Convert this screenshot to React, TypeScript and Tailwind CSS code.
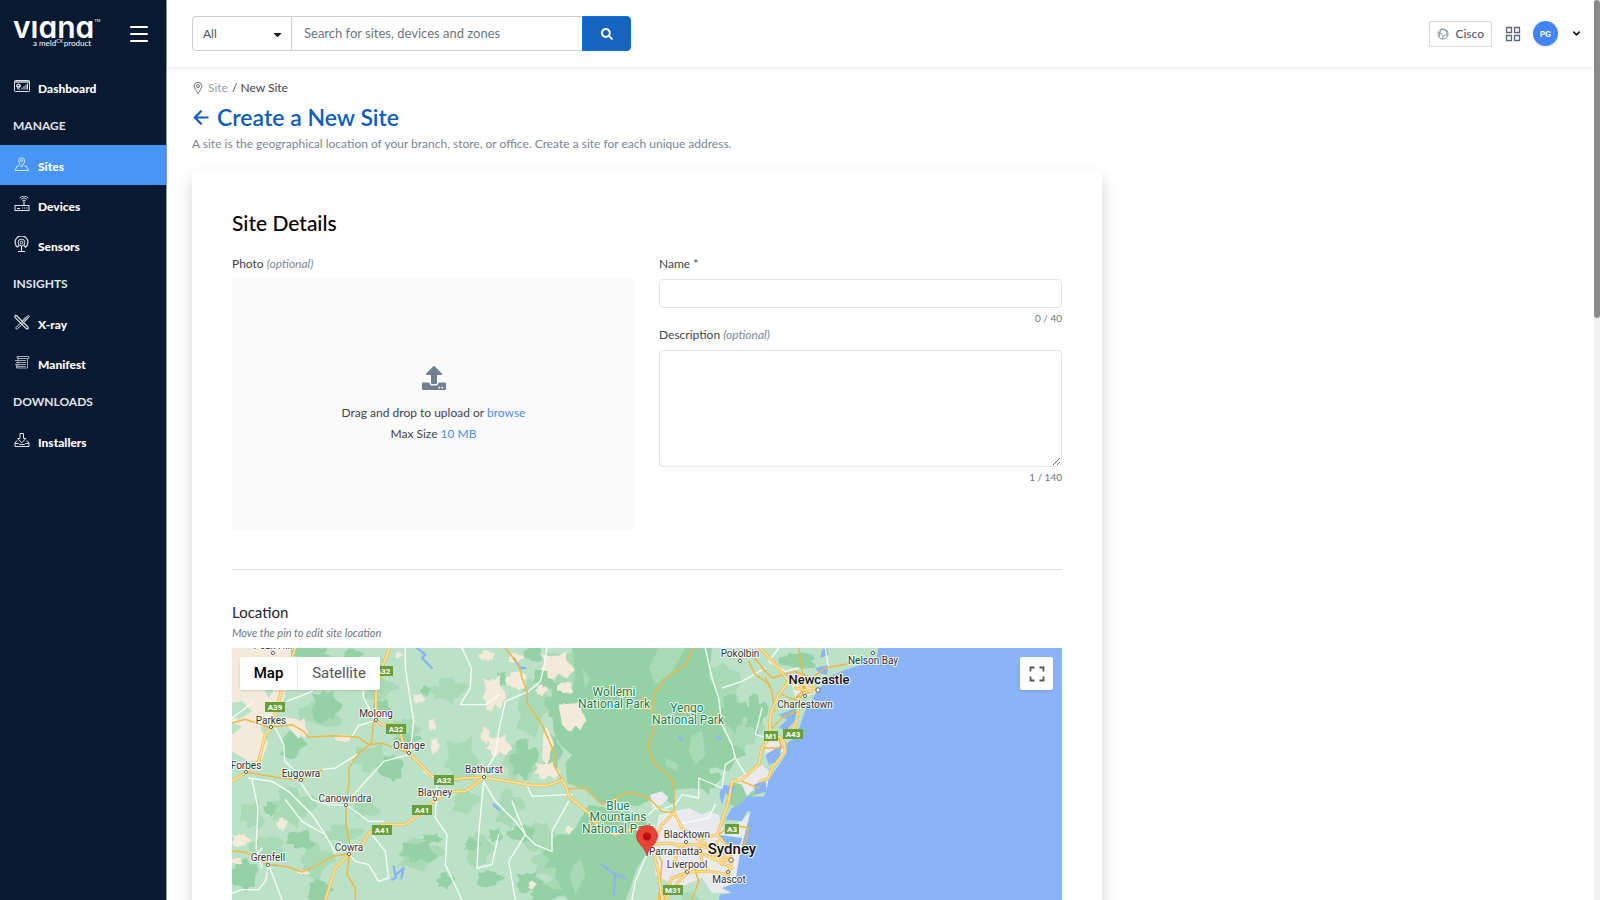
import React from 'react';
import { ChevronDown } from 'lucide-react';
import { FaCaretDown, FaSearch, FaUpload } from 'react-icons/fa';

interface NavItem {
  label: string;
  icon: React.ReactNode;
  active?: boolean;
}

interface NavSection {
  title?: string;
  items: NavItem[];
}

const Icon = ({ children, className = '' }: { children: React.ReactNode; className?: string }) => (
  <svg
    viewBox="0 0 16 16"
    className={`h-4 w-4 shrink-0 ${className}`}
    fill="none"
    stroke="currentColor"
    strokeWidth="1"
    aria-hidden="true"
  >
    {children}
  </svg>
);

const sections: NavSection[] = [
  {
    items: [
      {
        label: 'Dashboard',
        icon: (
          <Icon>
            <rect x="0.5" y="2.5" width="15" height="11" rx="0.8" />
            <path d="M1 4h14" strokeWidth="1.4" />
            <path d="M3 6.5h3v2H3zM3 10l3 1.5M8 11.5v-2M10 11.5V8M12 11.5V6.5M13.5 11.5v-6" />
            <circle cx="4.5" cy="8" r="1.8" />
          </Icon>
        ),
      },
    ],
  },
  {
    title: 'MANAGE',
    items: [
      {
        label: 'Sites',
        active: true,
        icon: (
          <Icon>
            <path d="M7.7 11C6.2 8.5 4.7 6.7 4.7 4.8a3 3 0 0 1 6 0C10.7 6.7 9.2 8.5 7.7 11z" />
            <circle cx="7.7" cy="4.7" r="1" />
            <path d="M5 10H3.2L1 14.5h13.5L12.3 10h-1.8" />
          </Icon>
        ),
      },
      {
        label: 'Devices',
        icon: (
          <Icon>
            <rect x="1" y="9.5" width="14" height="5" />
            <path d="M3 12.5h3M8 12h1M10 12h1M12 12h1.5M10 9.5v-4" strokeWidth="1.2" />
            <path d="M8.3 5a2.3 2.3 0 0 1 3.4 0M7 3.4a4.2 4.2 0 0 1 6 0M5.7 2a6 6 0 0 1 8.6 0" />
          </Icon>
        ),
      },
      {
        label: 'Sensors',
        icon: (
          <Icon>
            <circle cx="7.5" cy="6.5" r="1.4" />
            <circle cx="7.5" cy="6.5" r="3.4" />
            <path d="M3.5 11.2a6.4 6.4 0 1 1 8 0L10 9.3M3.5 11.2L5 9.3M7.5 10v5.5M4 15.5h7" strokeWidth="1.2" />
          </Icon>
        ),
      },
    ],
  },
  {
    title: 'INSIGHTS',
    items: [
      {
        label: 'X-ray',
        icon: (
          <Icon>
            <path
              d="M2.5 1.5l11.5 11.5M1 3.3l11.5 11.5M1 3.3C.6 1.5 1.5 1 2.5 1.5M12.5 14.8c1.5.3 2.2-.3 1.5-1.8"
              strokeWidth="1.2"
            />
            <path d="M14 1.5L2 13.5M15 3L3.5 14.8M14 1.5c1.2-.3 1.4.6 1 1.5M2 13.5c-.8 1 .2 1.8 1.5 1.3M11 3.5l2 2M10 4.5l2 2M9 5.5l2 2M13 2.5l1.5 1.5" />
          </Icon>
        ),
      },
      {
        label: 'Manifest',
        icon: (
          <Icon className="opacity-70">
            <path d="M3 4V2.5h12v2h-1.5v9.5H2.5V11" />
            <path d="M3 4.5h10M1 6.5h11M2 8.5h10M1 10.5h11M3.5 12.5h8M4 2v12" />
          </Icon>
        ),
      },
    ],
  },
  {
    title: 'DOWNLOADS',
    items: [
      {
        label: 'Installers',
        icon: (
          <Icon>
            <path d="M6 1.5h3.5v5h2.3L7.75 10.8 3.7 6.5H6z" />
            <path d="M3.5 9H2.5L1 11v3.5h14V11l-1.5-2h-1M1 11.5h3.5l1 1h5l1-1H15" />
          </Icon>
        ),
      },
    ],
  },
];

const Sidebar = () => (
  <aside className="flex w-[167px] shrink-0 flex-col border-r border-[#8d96a3] bg-[#071a31] text-white">
    <div className="flex h-[67px] items-center justify-between pr-[18px] pl-[13px]">
      <a href="#" aria-label="viana" className="flex flex-col pb-1.5">
        <span className="flex items-start font-[Inter,sans-serif] text-[30px] leading-6 font-semibold [font-feature-settings:'cv11']">
          vıana
          <span className="text-[4px] leading-3 font-normal">TM</span>
        </span>
        <span className="flex items-start pl-5 font-[Lato,sans-serif] text-[8px] leading-2">
          a meld
          <span className="text-[5px] leading-1">CX</span>
          <span className="pl-px">product</span>
        </span>
      </a>
      <button type="button" aria-label="Toggle menu" className="flex flex-col gap-[5px]">
        <span className="h-0.5 w-[18px] rounded-sm bg-white" />
        <span className="h-0.5 w-[18px] rounded-sm bg-white" />
        <span className="h-0.5 w-[18px] rounded-sm bg-white" />
      </button>
    </div>
    <nav>
      {sections.map((section, index) => (
        <div key={index}>
          {section.title && (
            <h2 className="flex h-[38px] items-center text-[12px] leading-4 pl-[13px] font-bold text-[#e2e5ea]">{section.title}</h2>
          )}
          {section.items.map((item) => (
            <a
              key={item.label}
              href="#"
              className={`flex h-10 items-center gap-2 pl-[14px] text-[12px] font-black ${
                item.active ? 'bg-[#4796f7]' : ''
              }`}
            >
              <span className="pb-0.5 text-[#dfe3e8]">{item.icon}</span>
              <span className="pt-1">{item.label}</span>
            </a>
          ))}
        </div>
      ))}
    </nav>
  </aside>
);

const Header = () => (
  <header className="z-10 flex h-[67px] shrink-0 items-center justify-between bg-white pr-3 pl-[25px] shadow-[0_1px_4px_rgba(0,0,0,0.12)]">
    <form className="flex h-[35px] w-[439px]" onSubmit={(e) => e.preventDefault()}>
      <div className="relative w-[100px] shrink-0">
        <select
          aria-label="Search category"
          className="h-full w-full appearance-none rounded-l border border-[#c8cfd8] bg-white pl-2.5 text-[12px] text-[#495057]"
        >
          <option>All</option>
        </select>
        <FaCaretDown size={13} className="pointer-events-none absolute top-3 right-2 text-[#212529]" />
      </div>
      <input
        type="text"
        aria-label="Search"
        placeholder="Search for sites, devices and zones"
        className="min-w-0 flex-1 border-y border-[#c8cfd8] bg-white px-3 text-[13px] placeholder:text-[#6c757d]"
      />
      <button
        type="submit"
        aria-label="Search"
        className="flex w-[49px] items-center justify-center rounded-r border border-[#0a74e6] bg-[#1564c0] text-white"
      >
        <FaSearch size={12} />
      </button>
    </form>
    <div className="flex items-center">
      <button
        type="button"
        className="flex h-[26px] items-center gap-1.5 rounded-xs border border-[#d3dae2] px-[7px] text-[12px] text-[#495057]"
      >
        <Icon className="h-3! w-3! text-[#6b7a90]">
          <circle cx="8" cy="8" r="6.8" />
          <path d="M6 1.5L4 6l4 5 5-2V3.5M4 6L1.5 7M8 11l-1 4M13 9l1.5 1M6 1.5L13 4M4 6l-1 6.5" />
        </Icon>
        Cisco
      </button>
      <button type="button" aria-label="Apps" className="ml-[13px] text-[#5a677d]">
        <Icon>
          <path d="M1.5 1.5h5v5h-5zM9.5 1.5h5v5h-5zM1.5 9.5h5v5h-5zM9.5 9.5h5v5h-5z" strokeWidth="1.3" />
        </Icon>
      </button>
      <button type="button" className="ml-3 flex items-center gap-[13px]">
        <span className="flex h-[25px] w-[25px] items-center justify-center rounded-full bg-[#4285f4] font-[Inter,sans-serif] text-[8px] font-bold text-white shadow">
          PG
        </span>
        <ChevronDown size={11} strokeWidth={4} className="text-[#212529]" />
      </button>
    </div>
  </header>
);

// Irregular patch of land cover, always the same for the same centre
const patch = (x: number, y: number, rx: number, ry: number) => {
  const points: string[] = [];
  for (let i = 0; i < 18; i++) {
    const angle = (i / 18) * Math.PI * 2;
    const k = 0.82 + 0.24 * Math.sin(x * 1.7 + y * 0.9 + i * i * 2.3);
    points.push(`${(x + Math.cos(angle) * rx * k).toFixed(1)} ${(y + Math.sin(angle) * ry * k).toFixed(1)}`);
  }
  return `M${points.join('L')}Z`;
};

type Patch = [number, number, number, number];

const midPatches: Patch[] = [
  [270, 200, 70, 50], [420, 330, 60, 50], [520, 240, 50, 40], [180, 480, 80, 60], [330, 560, 70, 30],
  [690, 330, 60, 80], [740, 600, 50, 60], [650, 130, 60, 40], [110, 600, 60, 40], [250, 640, 60, 60],
  [560, 620, 80, 50], [700, 460, 50, 40], [440, 120, 60, 40], [830, 480, 50, 60], [900, 180, 60, 90],
  [960, 640, 70, 60], [1000, 720, 70, 40], [860, 330, 60, 70], [1010, 60, 90, 70], [1060, 240, 80, 90],
  [920, 560, 60, 50], [60, 500, 40, 50], [400, 480, 50, 30], [1460, 130, 80, 90], [1520, 260, 80, 60],
];

const forestPatches: Patch[] = [
  [235, 15, 70, 24], [280, 170, 55, 55], [180, 290, 45, 45], [478, 365, 42, 45], [450, 175, 30, 25],
  [525, 275, 45, 18], [115, 485, 20, 26], [205, 575, 45, 35], [35, 685, 48, 55], [260, 725, 45, 38],
  [560, 610, 60, 40], [640, 700, 30, 26], [770, 690, 50, 28], [600, 570, 36, 16], [90, 220, 20, 20],
  [720, 590, 30, 20], [790, 560, 24, 24], [870, 560, 44, 30], [875, 340, 46, 66], [960, 310, 34, 66],
  [905, 20, 30, 30], [935, 90, 34, 40], [980, 170, 44, 66], [1000, 620, 80, 60], [890, 700, 50, 36],
  [810, 90, 20, 26], [360, 20, 36, 20], [580, 130, 16, 18], [1500, 200, 50, 60], [1570, 200, 40, 60],
  [1480, 320, 60, 50], [1520, 440, 50, 40], [1700, 40, 60, 30], [1420, 400, 50, 40], [940, 740, 60, 30],
];

const creamPatches: Patch[] = [
  [560, 150, 22, 16], [600, 228, 14, 22], [608, 290, 16, 28], [150, 530, 17, 22], [25, 575, 34, 22],
  [335, 272, 26, 14], [760, 265, 14, 30], [785, 130, 40, 60], [765, 25, 26, 18], [855, 100, 34, 34],
  [975, 50, 56, 46], [1000, 120, 26, 22], [928, 128, 20, 18], [1025, 200, 40, 52], [800, 290, 44, 36],
  [945, 290, 20, 60], [945, 365, 44, 30], [1010, 545, 14, 12], [900, 710, 14, 14], [213, 672, 22, 9],
  [205, 240, 24, 34], [15, 640, 18, 12], [500, 20, 14, 10], [850, 30, 28, 16],
];

const whiteRoads = [
  'M0 735L30 725 80 725 100 700 110 650 150 755M60 395L78 480 72 600 90 660',
  'M130 240L155 290 158 340 215 390M50 390L120 400 170 430 240 500 280 560 310 615',
  'M200 395L240 455 290 470 345 472M345 472L410 520 455 520M270 365L310 360 375 320',
  'M345 465L400 400 420 380 455 340 530 320M431 218L380 232 360 265M431 218L395 150 385 30',
  'M520 0L520 60 545 220 535 310M575 370L615 395 610 510 645 560 640 650 690 755',
  'M690 0L718 60 715 120 685 170 760 170 800 140M755 400L740 560 735 660 780 650 800 560',
  'M755 400L790 460 850 520 880 560 910 590 960 610 960 550 1010 460',
  'M945 0L935 60 925 100 890 130 820 160 800 250 790 320 750 385',
  'M880 400L900 445 1000 440 1020 440M840 460L880 560 830 640 850 755',
  'M420 560L460 610 470 690 440 700 410 650 370 640 352 620M90 600L60 640',
  'M1420 0L1440 90 1460 150 1470 230 1500 290 1510 330 1540 380M1470 120L1530 100 1600 60',
  'M1510 330L1480 350 1470 420 1400 390 1400 450 1350 440 1330 470 1300 480',
  'M1244 620L1210 700 1200 755M1250 500L1270 480 1310 490 1340 530 1380 520 1430 510 1450 470',
  'M1640 0L1610 40 1660 70 1700 60M1780 0L1790 60M1590 180L1570 260 1610 270',
  'M0 210L60 165M165 160L240 130 250 60M280 560L210 520 160 455',
];

const thinRoads = [
  'M0 225L40 214 110 238 180 230 215 250 230 268 290 264 330 264 380 268 410 290 450 285 500 305 532 316',
  'M425 218L418 285 380 316 350 360 352 400 342 470 342 530 356 600 352 620 345 680 370 720 370 755',
  'M0 610L40 612 109 650 160 655 210 672 250 655 300 625 352 618M40 372L130 388 205 396 270 366',
  'M820 0L860 50 870 90 885 130 885 165 930 230 965 310 965 350 990 395',
  'M1385 0L1360 50 1300 90 1266 140 1260 180 1268 230 1246 298 1270 350 1320 390 1326 430 1326 495',
  'M1005 422L1060 420 1110 470 1190 432 1250 450 1290 490 1326 495',
  'M1590 60L1620 90 1690 70 1740 90 1780 60 1860 45M1600 90L1620 130 1628 190M1690 70L1720 130 1700 0',
  'M1550 40L1570 80 1614 110M1580 420L1530 400M1590 300L1650 300 1640 270M1460 560L1500 530 1550 540 1530 620',
  'M1650 140L1700 160 1720 120 1690 150 1740 130M1260 590L1290 640 1280 755M1380 640L1400 700 1380 755',
  'M1520 30L1560 20 1600 70M1620 240L1650 210 1690 190',
];

const highways = [
  'M472 0L450 60 432 130 431 218 450 230 500 232 512 280 532 316 560 345 600 385 640 396 700 390 757 388',
  'M190 0L150 120 117 238 100 260 80 340 42 373 0 400M150 125L130 200',
  'M757 388L700 430 650 430 610 455 560 500 520 530 450 530 410 556 390 590 352 618 310 660 280 755',
  'M757 388L830 400 900 412 950 412 990 395 1005 422 1010 445 1070 495 1100 540 1150 560 1210 540 1260 590',
  'M1584 0L1640 60 1670 100 1640 140 1615 200 1612 270 1590 300 1580 350 1530 395 1500 400 1490 460 1470 520 1456 560',
  'M1326 495L1290 530 1260 590 1300 585 1340 590 1400 590 1450 610 1500 636',
  'M1326 495L1350 540 1400 575 1456 560 1490 600 1500 636 1490 680 1430 670 1370 672 1320 690 1290 755',
  'M1260 590L1280 680 1290 755M1340 590L1330 640 1370 672M1400 590L1410 640 1430 670M1456 580L1440 630 1500 640',
  'M1370 672L1340 700 1300 755M1400 575L1440 600 1470 650M1350 600L1420 620 1500 660',
  'M1584 400L1610 390 1620 360 1660 310 1655 280 1640 265M1700 180L1690 230 1670 260M1670 100L1740 115 1750 125M1690 120L1740 130',
];

interface Place {
  name: string;
  x: number;
  y: number;
  dot?: [number, number];
  size?: number;
  bold?: boolean;
  park?: boolean;
}

const places: Place[] = [
  { name: 'Peak Hill', x: 41, y: 1, dot: [41, 5] },
  { name: 'Parkes', x: 39, y: 76, dot: [39, 79] },
  { name: 'Molong', x: 144, y: 69, dot: [144, 72] },
  { name: 'Orange', x: 177, y: 101, dot: [177, 105] },
  { name: 'Forbes', x: 14, y: 121, dot: [14, 124] },
  { name: 'Eugowra', x: 69, y: 129, dot: [69, 132] },
  { name: 'Bathurst', x: 252, y: 125, dot: [252, 129] },
  { name: 'Blayney', x: 203, y: 148, dot: [203, 151] },
  { name: 'Canowindra', x: 113, y: 154, dot: [114, 157] },
  { name: 'Cowra', x: 117, y: 203, dot: [117, 206] },
  { name: 'Grenfell', x: 36, y: 213, dot: [36, 217] },
  { name: 'Pokolbin', x: 508, y: 9, dot: [508, 13] },
  { name: 'Nelson Bay', x: 641, y: 16, dot: [641, 5] },
  { name: 'Charlestown', x: 573, y: 60, dot: [573, 48] },
  { name: 'Newcastle', x: 587, y: 36, dot: [586, 42], size: 13, bold: true },
  { name: 'Blacktown', x: 455, y: 190, dot: [454, 194] },
  { name: 'Parramatta', x: 442, y: 207, dot: [468, 203] },
  { name: 'Liverpool', x: 455, y: 220, dot: [455, 224] },
  { name: 'Mascot', x: 497, y: 235, dot: [496, 224] },
  { name: 'Sydney', x: 500, y: 206, dot: [499, 212], size: 15, bold: true },
  { name: 'Wollemi', x: 382, y: 48, park: true, size: 12 },
  { name: 'National Park', x: 382, y: 60, park: true, size: 12 },
  { name: 'Yengo', x: 455, y: 64, park: true, size: 12 },
  { name: 'National Park', x: 456, y: 76, park: true, size: 12 },
  { name: 'Blue', x: 386, y: 162, park: true, size: 12 },
  { name: 'Mountains', x: 386, y: 173, park: true, size: 12 },
  { name: 'National Park', x: 386, y: 185, park: true, size: 12 },
];

const shields: { name: string; x: number; y: number }[] = [
  { name: 'A32', x: 151, y: 23 },
  { name: 'A39', x: 43, y: 59 },
  { name: 'A32', x: 164, y: 81 },
  { name: 'A32', x: 212, y: 132 },
  { name: 'A41', x: 190, y: 162 },
  { name: 'A41', x: 150, y: 182 },
  { name: 'A43', x: 561, y: 86 },
  { name: 'M1', x: 539, y: 88 },
  { name: 'A3', x: 500, y: 181 },
  { name: 'M31', x: 441, y: 242 },
];

const MapCanvas = () => (
  <svg
    viewBox="0 0 830 400"
    preserveAspectRatio="xMidYMin slice"
    className="block h-[400px] w-full font-[Roboto,sans-serif]"
    role="img"
    aria-label="Map of the site location"
  >
    <rect width="830" height="400" fill="#bbe2c6" />
    <g transform="scale(0.33333)" strokeLinejoin="round" strokeLinecap="round" fill="none">
      <path d={midPatches.map((p) => patch(...p)).join('')} fill="#a9dab6" />
      <path
        fill="#94d2a5"
        d="M1020 0L1440 0 1430 90 1462 140 1466 230 1500 300 1475 350 1410 370 1390 420 1330 425 1326 470 1290 450 1255 455 1215 475 1170 468 1105 466 1060 425 1005 405 1000 345 1020 320 985 290 965 250 960 190 1010 160 1030 80ZM1070 470L1240 500 1255 600 1215 660 1180 760 1180 1200 1000 1200 1010 760 970 690 980 600 1030 540Z"
      />
      <path
        fill="#a9dab6"
        d="M1280 0L1360 0 1320 70 1270 110 1250 60ZM1380 260L1410 250 1420 320 1390 350 1370 310ZM1050 60L1075 90 1060 120ZM1300 330L1340 350 1335 370 1300 350ZM1000 640L1040 620 1060 680 1030 740Z"
      />
      <path d={forestPatches.map((p) => patch(...p)).join('')} fill="#94d2a5" />
      <path
        fill="#f3eada"
        d="M0 0L175 0 180 40 195 70 165 100 155 160 125 180 120 215 85 240 108 285 90 335 50 340 0 310 0 260 30 235 0 225ZM150 205L200 215 215 250 200 272 170 238ZM980 170L1040 165 1060 220 1030 235 1010 250 990 230Z"
      />
      <path fill="#bbe2c6" d="M40 50L70 60 60 100 40 90ZM0 165L30 160 60 190 20 215 0 205ZM90 110L130 120 110 150Z" />
      <path d={creamPatches.map((p) => patch(...p)).join('')} fill="#f3eada" />
      <path
        fill="#e8eaed"
        d="M1255 440L1290 430 1310 450 1290 470 1260 480ZM1280 500L1330 490 1370 480 1410 500 1430 490 1460 500 1480 560 1500 540 1560 490 1545 560 1530 620 1520 690 1490 735 1440 735 1410 690 1340 720 1270 680 1265 580ZM1500 400L1590 350 1620 380 1600 430 1570 420 1545 445 1530 410ZM1680 110L1740 100 1755 130 1720 150 1690 150ZM1600 280L1650 270 1660 310 1600 330Z"
      />
      <path
        fill="#8ab4f8"
        d="M1440 1200L1450 800 1464 740 1500 735 1470 720 1509 706 1524 616 1539 556 1556 491 1545 490 1530 520 1480 515 1500 480 1530 465 1545 445 1594 446 1604 426 1609 396 1634 361 1664 316 1664 286 1694 266 1709 216 1724 176 1759 126 1789 86 1824 71 1884 51 1934 26 1939 0 2490 0 2490 1200Z"
      />
      <path
        fill="#8ab4f8"
        d="M1470 410L1510 415 1500 440 1480 435 1470 470 1462 440ZM1600 320L1650 290 1640 340 1610 350ZM1640 200L1690 180 1700 205 1665 245 1640 240 1665 215ZM1750 60L1790 50 1785 80 1760 75ZM1770 5L1785 0 1790 20 1765 30ZM1565 410L1600 395 1605 430 1570 440ZM1460 560L1530 570 1525 590 1480 590Z"
      />
      <path
        stroke="#8ab4f8"
        strokeWidth="7"
        d="M555 0L580 20 570 30 600 60M485 655L492 690 480 695M492 680L515 660 508 690M845 30L865 60 880 60M785 470L800 485M1110 650L1150 680 1180 690M1150 680L1145 740M1340 265L1350 275M1455 268L1465 274"
      />
      <path fill="#a9dab6" d="M1350 740L1380 730 1410 760 1350 780Z" />
      {whiteRoads.map((d) => (
        <path key={d} d={d} stroke="#f8fbf9" strokeWidth="4" />
      ))}
      {thinRoads.map((d) => (
        <path key={d} d={d} stroke="#efb844" strokeWidth="4.5" />
      ))}
      {highways.map((d) => (
        <path key={d} d={d} stroke="#f0b94a" strokeWidth="9" />
      ))}
      {highways.map((d) => (
        <path key={d} d={d} stroke="#fde19b" strokeWidth="5" />
      ))}
    </g>
    {shields.map((shield, index) => (
      <g key={index}>
        <rect x={shield.x - (shield.name.length * 3 + 1)} y={shield.y - 5} width={shield.name.length * 6 + 2} height="10" fill="#689f38" />
        <text x={shield.x} y={shield.y + 3} textAnchor="middle" fontSize="8" fontWeight="700" fill="#fff">
          {shield.name}
        </text>
      </g>
    ))}
    {places.map((place, index) => (
      <g key={index}>
        {place.dot && <circle cx={place.dot[0]} cy={place.dot[1]} r={place.bold ? 2.2 : 1.6} fill="#fff" stroke="#555" strokeWidth="0.9" />}
        <text
          x={place.x}
          y={place.y}
          textAnchor="middle"
          fontSize={place.size ?? 10}
          fontWeight={place.bold ? 500 : 400}
          fill={place.park ? '#188048' : place.bold ? '#111' : '#333'}
          stroke="#fff"
          strokeOpacity="0.85"
          strokeWidth="2"
          strokeLinejoin="round"
          paintOrder="stroke"
        >
          {place.name}
        </text>
      </g>
    ))}
    <path
      d="M415 208C414 199 404.5 196 404.5 188a10.5 10.5 0 0 1 21 0C425.5 196 416 199 415 208z"
      fill="#ea4335"
      stroke="#c5221f"
      strokeWidth="0.7"
    />
    <circle cx="415" cy="188.5" r="4" fill="#b31412" />
  </svg>
);

const Optional = () => <em className="text-[#7b8794]">(optional)</em>;

const SiteForm = () => (
  <form
    className="mt-[18px] w-full max-w-[910px] rounded-sm bg-white p-10 shadow-[0_8px_16px_rgba(0,0,0,0.17)]"
    onSubmit={(e) => e.preventDefault()}
  >
    <h2 className="text-[21px] leading-6 font-medium text-black">Site Details</h2>
    <div className="mt-5 grid grid-cols-2 gap-6">
      <div>
        <label htmlFor="photo" className="block leading-[18px]">
          Photo <Optional />
        </label>
        <div className="mt-1.5 flex h-[250px] flex-col items-center justify-center bg-[#fafafa] pt-0.5">
          <FaUpload size={24} className="text-[#708090]" />
          <p className="mt-3 leading-[21px]">
            Drag and drop to upload or{' '}
            <label htmlFor="photo" className="cursor-pointer text-[#4d8df6]">
              browse
            </label>
          </p>
          <p className="leading-[21px]">
            Max Size <span className="text-[#4d8df6]">10 MB</span>
          </p>
          <input id="photo" type="file" className="sr-only" />
        </div>
      </div>
      <div>
        <label htmlFor="name" className="block leading-[18px]">
          Name *
        </label>
        <input id="name" type="text" className="mt-1.5 block h-[29px] w-full rounded border border-[#e2e4e7] px-2" />
        <p className="mt-0.5 text-right text-[10px] leading-4 text-[#6c757d]">0 / 40</p>
        <label htmlFor="description" className="block leading-[18px]">
          Description <Optional />
        </label>
        <textarea id="description" className="mt-1.5 block h-[117px] w-full resize rounded border border-[#e2e4e7] px-2 py-1" />
        <p className="mt-0.5 text-right text-[10px] leading-4 text-[#6c757d]">1 / 140</p>
      </div>
    </div>
    <hr className="mt-10 border-[#dcdfe3]" />
    <h3 className="mt-[30px] text-[15px] leading-6 text-[#212529]">Location</h3>
    <p className="text-[11px] leading-[18px] text-[#6c757d] italic">Move the pin to edit site location</p>
    <div className="relative mt-1.5 overflow-hidden">
      <MapCanvas />
      <div className="absolute top-[9px] left-2 flex h-[33px] rounded-xs bg-white font-[Roboto,sans-serif] text-[15px] shadow">
        <button type="button" className="w-[58px] border-r border-[#ececec] font-medium text-black">
          Map
        </button>
        <button type="button" className="w-[82px] text-[#565656]">
          Satellite
        </button>
      </div>
      <button
        type="button"
        aria-label="Toggle fullscreen view"
        className="absolute top-[9px] right-[9px] flex h-[33px] w-[33px] items-center justify-center rounded-xs bg-white text-[#555] shadow"
      >
        <Icon>
          <path d="M1.5 5.5v-4h4M10.5 1.5h4v4M14.5 10.5v4h-4M5.5 14.5h-4v-4" strokeWidth="1.8" />
        </Icon>
      </button>
    </div>
  </form>
);

const App = () => (
  <div className="flex h-screen overflow-hidden bg-white font-[Lato,sans-serif] text-[12px] text-[#3d444b]">
    <Sidebar />
    <div className="flex min-w-0 flex-1 flex-col">
      <Header />
      <main className="min-h-0 flex-1 overflow-hidden px-[25px] pt-3">
        <nav aria-label="Breadcrumb" className="flex items-center text-[12px] leading-[18px]">
          <Icon className="mr-1 h-3! w-3! text-[#444]">
            <path d="M8 15.5C5.5 11.5 3 8.5 3 5.5a5 5 0 0 1 10 0C13 8.5 10.5 11.5 8 15.5z" />
            <circle cx="8" cy="5.5" r="2" />
          </Icon>
          <a href="#" className="text-[#99a1ab]">
            Site
          </a>
          <span className="pl-1">/ New Site</span>
        </nav>
        <h1 className="mt-1 flex items-center gap-2 text-[23px] leading-8 font-semibold text-[#0f5cc0]">
          <a href="#" aria-label="Back" className="pl-px">
            <Icon>
              <path d="M15.5 8.5H2M8.500 1.800L1.800 8.500l6.700 6.700" strokeWidth="2.2" />
            </Icon>
          </a>
          Create a New Site
        </h1>
        <p className="pt-0.5 leading-[18px] text-[#7b8490]">
          A site is the geographical location of your branch, store, or office. Create a site for each unique address.
        </p>
        <SiteForm />
      </main>
    </div>
    <div className="w-1.5 shrink-0 bg-[#f1f1f1]">
      <div className="h-[35.3%] rounded-sm bg-[#8b8b8b]" />
    </div>
  </div>
);

export default App;
